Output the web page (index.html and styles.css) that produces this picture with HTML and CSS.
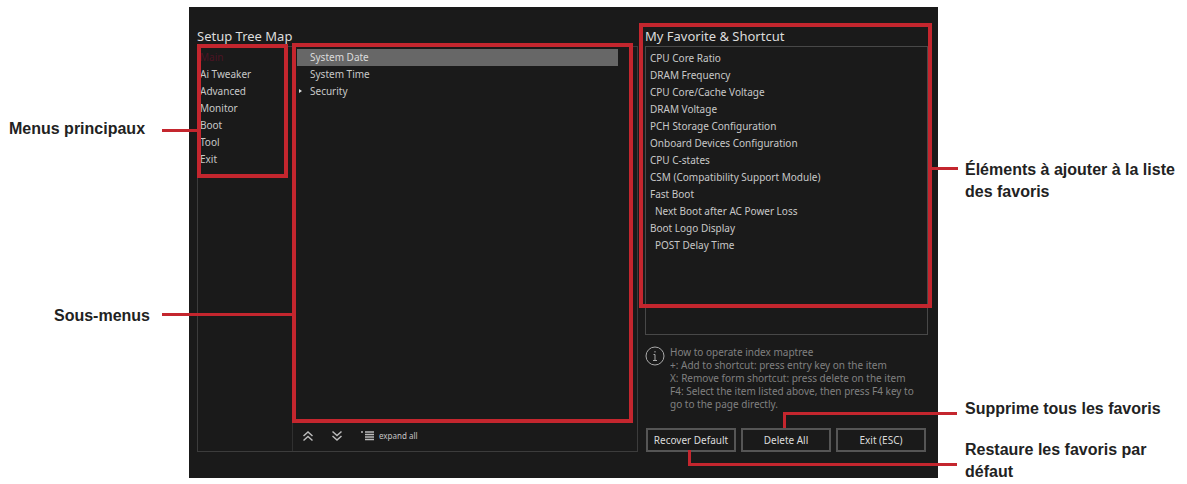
FILE: index.html
```html
<!DOCTYPE html>
<html lang="fr">
<head>
<meta charset="utf-8">
<title>Setup Tree Map</title>
<link rel="stylesheet" href="styles.css">
</head>
<body>
<main class="figure">
  <div class="notes notes-left">
    <p class="note note-menus">Menus principaux</p>
    <p class="note note-submenus">Sous-menus</p>
  </div>

  <div class="screen">
    <section class="tree">
      <h2 class="title">Setup Tree Map</h2>
      <div class="tree-box">
        <nav class="main-menu">
          <ul class="list">
            <li class="row row-current">Main</li>
            <li class="row">Ai Tweaker</li>
            <li class="row">Advanced</li>
            <li class="row">Monitor</li>
            <li class="row">Boot</li>
            <li class="row">Tool</li>
            <li class="row">Exit</li>
          </ul>
          <span class="frame frame-menus"></span>
        </nav>
        <div class="sub-menu">
          <ul class="list sub-list">
            <li class="row row-selected">System Date</li>
            <li class="row">System Time</li>
            <li class="row row-parent">Security</li>
          </ul>
          <div class="tools">
            <button class="tool" aria-label="Collapse">
              <svg width="12" height="12" viewBox="0 0 12 12"><path d="M1.500 6 6 2l4.500 4M1.500 10.500 6 6.500l4.500 4"/></svg>
            </button>
            <button class="tool" aria-label="Expand">
              <svg width="12" height="12" viewBox="0 0 12 12"><path d="M1.500 1.500 6 5.500l4.500-4M1.500 6 6 10l4.500-4"/></svg>
            </button>
            <button class="tool tool-text">
              <svg width="14" height="12" viewBox="0 0 14 12"><path d="M0 2h2M4 2h9M4 4.500h9M4 7h9M4 9.500h9"/></svg>
              <span>expand all</span>
            </button>
          </div>
          <span class="frame frame-submenus"></span>
        </div>
      </div>
    </section>

    <section class="favorites">
      <h2 class="title">My Favorite &amp; Shortcut</h2>
      <ul class="list favorite-box">
        <li class="row">CPU Core Ratio</li>
        <li class="row">DRAM Frequency</li>
        <li class="row">CPU Core/Cache Voltage</li>
        <li class="row">DRAM Voltage</li>
        <li class="row">PCH Storage Configuration</li>
        <li class="row">Onboard Devices Configuration</li>
        <li class="row">CPU C-states</li>
        <li class="row">CSM (Compatibility Support Module)</li>
        <li class="row">Fast Boot</li>
        <li class="row row-child">Next Boot after AC Power Loss</li>
        <li class="row">Boot Logo Display</li>
        <li class="row row-child">POST Delay Time</li>
      </ul>
      <div class="help">
        <svg class="help-icon" width="20" height="20" viewBox="0 0 20 20"><circle cx="10" cy="10" r="9"/><path d="M8.500 8.500H10v6M8 14.500h4M10 5v1.500"/></svg>
        <p class="help-text">How to operate index maptree<br>+: Add to shortcut: press entry key on the item<br>X: Remove form shortcut: press delete on the item<br>F4: Select the item listed above, then press F4 key to<br>go to the page directly.</p>
      </div>
      <div class="actions">
        <button class="action">Recover Default<span class="lead lead-recover"></span></button>
        <button class="action">Delete All<span class="lead lead-delete"></span></button>
        <button class="action">Exit (ESC)</button>
      </div>
      <span class="frame frame-favorites"></span>
    </section>
  </div>

  <div class="notes notes-right">
    <p class="note note-items">Éléments à ajouter à la liste des favoris</p>
    <p class="note note-delete">Supprime tous les favoris</p>
    <p class="note note-recover">Restaure les favoris par défaut</p>
  </div>
</main>
</body>
</html>
```
FILE: styles.css
```css
* {
  box-sizing: border-box;
}

body {
  margin: 0;
  background: #fff;
}

h2,
p,
ul {
  margin: 0;
  padding: 0;
}

.figure {
  display: flex;
  align-items: flex-start;
  padding-top: 7px;
}

/* Side notes */
.notes {
  flex: none;
  color: #222;
  font: bold 16px/22px "Liberation Sans", Arial, sans-serif;
}

.notes-left {
  width: 189px;
  padding: 111px 0 0 9px;
}

.notes-right {
  width: 249px;
  padding: 152px 0 0 27px;
}

.note-submenus {
  padding: 165px 0 0 45px;
}

.note-delete {
  padding-top: 195px;
}

.note-recover {
  max-width: 200px;
  padding-top: 19px;
}

/* Setup screen */
.screen {
  flex: 1;
  display: flex;
  gap: 7px;
  min-width: 0;
  padding: 18px 10px 26px 8px;
  background: #1a1a1a;
  color: #c8c8c8;
  font: 10px/17px "Noto Sans", "Open Sans", sans-serif;
}

.title {
  height: 21px;
  color: #dcdcdc;
  font-size: 13px;
  font-weight: 400;
  line-height: 22px;
  white-space: nowrap;
}

.list {
  list-style: none;
}

.row {
  white-space: nowrap;
}

.tree {
  flex: 1;
  display: flex;
  flex-direction: column;
}

.tree-box {
  flex: 1;
  display: flex;
  border: 1px solid #3c3c3c;
}

.main-menu {
  position: relative;
  flex: none;
  width: 95px;
  padding: 2px 0 0 2px;
  border-right: 1px solid #303030;
}

.row-current {
  color: #4c1424;
}

.sub-menu {
  position: relative;
  flex: 1;
  display: flex;
  flex-direction: column;
}

.sub-list {
  flex: 1;
  padding: 2px 19px 0 4px;
}

.sub-list .row {
  padding-left: 13px;
}

.sub-list .row-selected {
  background: #676767;
  color: #dcdcdc;
}

.sub-list .row-parent::before {
  content: "";
  float: left;
  margin: 6px 0 0 -11px;
  border: 2px solid transparent;
  border-left: 3px solid #ddd;
}

.tools {
  display: flex;
  align-items: center;
  gap: 17px;
  height: 28px;
  padding: 0 0 3px 9px;
}

.tool {
  display: flex;
  align-items: center;
  gap: 4px;
  padding: 0;
  border: 0;
  background: none;
  color: #c4c4c4;
  font: 8px/12px "Noto Sans", sans-serif;
}

.tool-text {
  margin-left: 1px;
}

.tool svg {
  fill: none;
  stroke: #bbb;
  stroke-width: 1.5;
}

.favorites {
  position: relative;
  flex: none;
  display: flex;
  flex-direction: column;
  width: 283px;
}

.favorite-box {
  min-height: 289px;
  padding: 3px 0 0 4px;
  border: 1px solid #484848;
}

.row-child {
  padding-left: 5px;
}

.help {
  display: flex;
  gap: 5px;
  padding-top: 11px;
}

.help-icon {
  flex: none;
  fill: none;
  stroke: #aaa;
}

.help-text {
  color: #808080;
  font-size: 10px;
  line-height: 13px;
  white-space: nowrap;
}

.actions {
  display: grid;
  grid-template-columns: repeat(3, 1fr);
  gap: 5px;
  margin-top: 17px;
  padding: 0 2px 0 1px;
}

.action {
  position: relative;
  height: 24px;
  padding: 0;
  border: 2px solid #555;
  background: #1a1a1a;
  color: #dcdcdc;
  font: 10px/18px "Noto Sans", sans-serif;
}

/* Red callout frames and leader lines */
.frame {
  position: absolute;
  border: 4px solid #c4262e;
  pointer-events: none;
}

.frame::before {
  content: "";
  position: absolute;
  height: 3px;
  background: #c4262e;
}

.frame-menus {
  inset: -3px 4px auto -1px;
  height: 134px;
}

.frame-menus::before {
  top: 81px;
  right: 100%;
  width: 39px;
}

.frame-submenus {
  inset: -4px 4px 28px -1px;
}

.frame-submenus::before {
  top: 266px;
  right: 100%;
  width: 134px;
}

.frame-favorites {
  inset: -2px -4px auto -6px;
  height: 285px;
}

.frame-favorites::before {
  top: 140px;
  left: 100%;
  width: 30px;
}

.lead {
  position: absolute;
  border: 0 solid #c4262e;
}

.lead-delete {
  bottom: 22px;
  left: 40px;
  width: 174px;
  height: 16px;
  border-width: 3px 0 0 3px;
}

.lead-recover {
  top: 20px;
  left: 40px;
  width: 269px;
  height: 16px;
  border-width: 0 0 3px 3px;
}
```
